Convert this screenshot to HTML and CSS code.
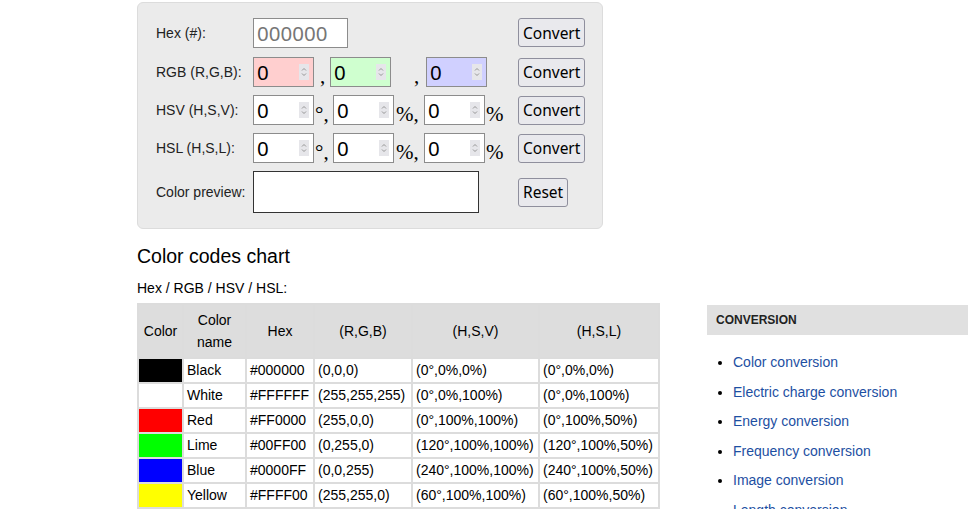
FILE: index.html
```html
<!DOCTYPE html>
<html lang="en">
<head>
<meta charset="utf-8">
<title>Color conversion</title>
<link rel="stylesheet" href="styles.css">
</head>
<body>
<div class="page">
  <main class="main">
    <div class="panel">
      <div class="row r1">
        <div class="lbl">Hex (#):</div>
        <div class="fields"><input class="hex" type="text" placeholder="000000"></div>
        <button class="btn">Convert</button>
      </div>
      <div class="row">
        <div class="lbl">RGB (R,G,B):</div>
        <div class="fields">
          <span class="num red"><input type="text" value="0"><span class="spin"><svg width="10" height="16" viewBox="0 0 10 16"><path d="M3 6.5 5 4.5 7 6.5M3 9.5 5 11.5 7 9.5" fill="none" stroke="#8a8a8a" stroke-width="0.9"/></svg></span></span>
          <span class="sep s-c1">,</span>
          <span class="num green"><input type="text" value="0"><span class="spin"><svg width="10" height="16" viewBox="0 0 10 16"><path d="M3 6.5 5 4.5 7 6.5M3 9.5 5 11.5 7 9.5" fill="none" stroke="#8a8a8a" stroke-width="0.9"/></svg></span></span>
          <span class="sep s-c2">,</span>
          <span class="num blue"><input type="text" value="0"><span class="spin"><svg width="10" height="16" viewBox="0 0 10 16"><path d="M3 6.5 5 4.5 7 6.5M3 9.5 5 11.5 7 9.5" fill="none" stroke="#8a8a8a" stroke-width="0.9"/></svg></span></span>
        </div>
        <button class="btn">Convert</button>
      </div>
      <div class="row">
        <div class="lbl">HSV (H,S,V):</div>
        <div class="fields">
          <span class="num"><input type="text" value="0"><span class="spin"><svg width="10" height="16" viewBox="0 0 10 16"><path d="M3 6.5 5 4.5 7 6.5M3 9.5 5 11.5 7 9.5" fill="none" stroke="#8a8a8a" stroke-width="0.9"/></svg></span></span>
          <span class="sep s-deg">°,</span>
          <span class="num"><input type="text" value="0"><span class="spin"><svg width="10" height="16" viewBox="0 0 10 16"><path d="M3 6.5 5 4.5 7 6.5M3 9.5 5 11.5 7 9.5" fill="none" stroke="#8a8a8a" stroke-width="0.9"/></svg></span></span>
          <span class="sep s-pct">%,</span>
          <span class="num"><input type="text" value="0"><span class="spin"><svg width="10" height="16" viewBox="0 0 10 16"><path d="M3 6.5 5 4.5 7 6.5M3 9.5 5 11.5 7 9.5" fill="none" stroke="#8a8a8a" stroke-width="0.9"/></svg></span></span>
          <span class="sep s-end">%</span>
        </div>
        <button class="btn">Convert</button>
      </div>
      <div class="row">
        <div class="lbl">HSL (H,S,L):</div>
        <div class="fields">
          <span class="num"><input type="text" value="0"><span class="spin"><svg width="10" height="16" viewBox="0 0 10 16"><path d="M3 6.5 5 4.5 7 6.5M3 9.5 5 11.5 7 9.5" fill="none" stroke="#8a8a8a" stroke-width="0.9"/></svg></span></span>
          <span class="sep s-deg">°,</span>
          <span class="num"><input type="text" value="0"><span class="spin"><svg width="10" height="16" viewBox="0 0 10 16"><path d="M3 6.5 5 4.5 7 6.5M3 9.5 5 11.5 7 9.5" fill="none" stroke="#8a8a8a" stroke-width="0.9"/></svg></span></span>
          <span class="sep s-pct">%,</span>
          <span class="num"><input type="text" value="0"><span class="spin"><svg width="10" height="16" viewBox="0 0 10 16"><path d="M3 6.5 5 4.5 7 6.5M3 9.5 5 11.5 7 9.5" fill="none" stroke="#8a8a8a" stroke-width="0.9"/></svg></span></span>
          <span class="sep s-end">%</span>
        </div>
        <button class="btn">Convert</button>
      </div>
      <div class="row preview-row">
        <div class="lbl">Color preview:</div>
        <div class="fields"><div class="preview"></div></div>
        <button class="btn">Reset</button>
      </div>
    </div>

    <h2 class="title">Color codes chart</h2>
    <p class="sub">Hex / RGB / HSV / HSL:</p>
    <table class="chart">
      <thead>
        <tr>
          <th class="c1">Color</th>
          <th class="c2">Color<br>name</th>
          <th class="c3">Hex</th>
          <th class="c4">(R,G,B)</th>
          <th class="c5">(H,S,V)</th>
          <th class="c6">(H,S,L)</th>
        </tr>
      </thead>
      <tbody>
        <tr><td class="sw sw-black"></td><td>Black</td><td>#000000</td><td>(0,0,0)</td><td>(0°,0%,0%)</td><td>(0°,0%,0%)</td></tr>
        <tr><td class="sw sw-white"></td><td>White</td><td>#FFFFFF</td><td>(255,255,255)</td><td>(0°,0%,100%)</td><td>(0°,0%,100%)</td></tr>
        <tr><td class="sw sw-red"></td><td>Red</td><td>#FF0000</td><td>(255,0,0)</td><td>(0°,100%,100%)</td><td>(0°,100%,50%)</td></tr>
        <tr><td class="sw sw-lime"></td><td>Lime</td><td>#00FF00</td><td>(0,255,0)</td><td>(120°,100%,100%)</td><td>(120°,100%,50%)</td></tr>
        <tr><td class="sw sw-blue"></td><td>Blue</td><td>#0000FF</td><td>(0,0,255)</td><td>(240°,100%,100%)</td><td>(240°,100%,50%)</td></tr>
        <tr><td class="sw sw-yellow"></td><td>Yellow</td><td>#FFFF00</td><td>(255,255,0)</td><td>(60°,100%,100%)</td><td>(60°,100%,50%)</td></tr>
      </tbody>
    </table>
  </main>

  <aside class="side">
    <div class="side-head">CONVERSION</div>
    <ul class="links">
      <li><a href="#">Color conversion</a></li>
      <li><a href="#">Electric charge conversion</a></li>
      <li><a href="#">Energy conversion</a></li>
      <li><a href="#">Frequency conversion</a></li>
      <li><a href="#">Image conversion</a></li>
      <li><a href="#">Length conversion</a></li>
    </ul>
  </aside>
</div>
</body>
</html>
```

FILE: styles.css
```css
html, body {
  margin: 0;
  padding: 0;
  background: #fff;
}
body {
  font-family: "Liberation Sans", Arial, sans-serif;
  font-size: 14px;
  color: #000;
  overflow: hidden;
}
.page {
  display: flex;
  align-items: flex-start;
  padding-left: 137px;
}
.main {
  width: 521px;
  flex: none;
}

/* form panel */
.panel {
  margin-top: 2px;
  width: 466px;
  box-sizing: border-box;
  background: #ebebeb;
  border: 1px solid #dcdcdc;
  border-radius: 6px;
  padding: 9px 0 15px 18px;
}
.row {
  display: flex;
  align-items: center;
  height: 38px;
}
.r1 { height: 41px; }
.preview-row {
  height: 42px;
  margin-top: 4px;
}
.lbl {
  width: 97px;
  flex: none;
  color: #222;
  font-size: 14px;
}
.fields {
  width: 265px;
  flex: none;
  display: flex;
  align-items: center;
}
.hex {
  width: 95px;
  height: 30px;
  box-sizing: border-box;
  border: 1px solid #8c8c8c;
  background: #fff;
  padding: 0 3px;
  font-family: "Noto Sans", "Open Sans", sans-serif;
  font-size: 20.5px;
  color: #000;
  outline: none;
}
.hex::placeholder {
  color: #767676;
  opacity: 1;
}
.num {
  display: inline-flex;
  align-items: center;
  width: 61px;
  height: 30px;
  box-sizing: border-box;
  border: 1px solid #8c8c8c;
  background: #fff;
  flex: none;
}
.num input {
  width: 38px;
  height: 28px;
  border: 0;
  padding: 0 0 0 3px;
  margin: 0;
  background: transparent;
  font-family: "Noto Sans", "Open Sans", sans-serif;
  font-size: 20.5px;
  color: #000;
  outline: none;
}
.num.red { background: #ffcfcf; }
.num.green { background: #cfffcf; }
.num.blue { background: #d0d0ff; }
.spin {
  display: flex;
  width: 10px;
  height: 16px;
  margin-left: 4px;
  background: #e6e6ea;
}
.spin svg { display: block; }
.sep {
  font-family: "Liberation Serif", "Times New Roman", serif;
  font-size: 21px;
  line-height: 30px;
  flex: none;
  padding-top: 4px;
  box-sizing: border-box;
  height: 30px;
}
.s-c1 { width: 16px; padding-left: 6px; }
.s-c2 { width: 35px; padding-left: 23px; }
.s-deg { width: 19px; padding-left: 1px; }
.s-pct { width: 30px; padding-left: 2px; }
.s-end { padding-left: 1px; }

.preview {
  width: 226px;
  height: 42px;
  box-sizing: border-box;
  border: 1px solid #333;
  background: #fff;
}
.btn {
  flex: none;
  height: 29px;
  padding: 0 4px;
  margin: 0;
  border: 1px solid #8f8f9d;
  border-radius: 3px;
  background: #e9e9ed;
  font-family: "Noto Sans", "Open Sans", sans-serif;
  font-size: 15.5px;
  color: #000;
  line-height: 26px;
}

/* chart */
.title {
  margin: 15px 0 0;
  font-size: 19.5px;
  font-weight: normal;
  line-height: 24px;
  color: #000;
}
.sub {
  margin: 11px 0 0;
  font-size: 14px;
  line-height: 18px;
}
.chart {
  margin-top: 6px;
  width: 521px;
  table-layout: fixed;
  border-collapse: collapse;
  font-size: 14px;
}
.chart th, .chart td {
  border: 2px solid #dcdcdc;
}
.chart th {
  background: #dddddd;
  font-weight: normal;
  line-height: 22px;
  padding: 4px 2px;
  text-align: center;
}
.chart td {
  line-height: 17px;
  padding: 3px 3px;
  white-space: nowrap;
  overflow: visible;
}
.c1 { width: 39px; }
.c2 { width: 57px; }
.c3 { width: 62px; }
.c4 { width: 92px; }
.c5 { width: 121px; }
.c6 { width: 114px; }
.sw-black { background: #000; }
.sw-white { background: #fff; }
.sw-red { background: #f00; }
.sw-lime { background: #0f0; }
.sw-blue { background: #00f; }
.sw-yellow { background: #ff0; }

/* sidebar */
.side {
  margin-left: 49px;
  margin-top: 305px;
  width: 261px;
  flex: none;
}
.side-head {
  height: 30px;
  line-height: 30px;
  background: #e0e0e0;
  padding-left: 9px;
  font-size: 12px;
  font-weight: bold;
  color: #222;
}
.links {
  margin: 13px 0 0;
  padding-left: 26px;
  list-style: disc;
}
.links li {
  line-height: 29.5px;
  font-size: 14px;
}
.links a {
  color: #1d4fa2;
  text-decoration: none;
}
```
